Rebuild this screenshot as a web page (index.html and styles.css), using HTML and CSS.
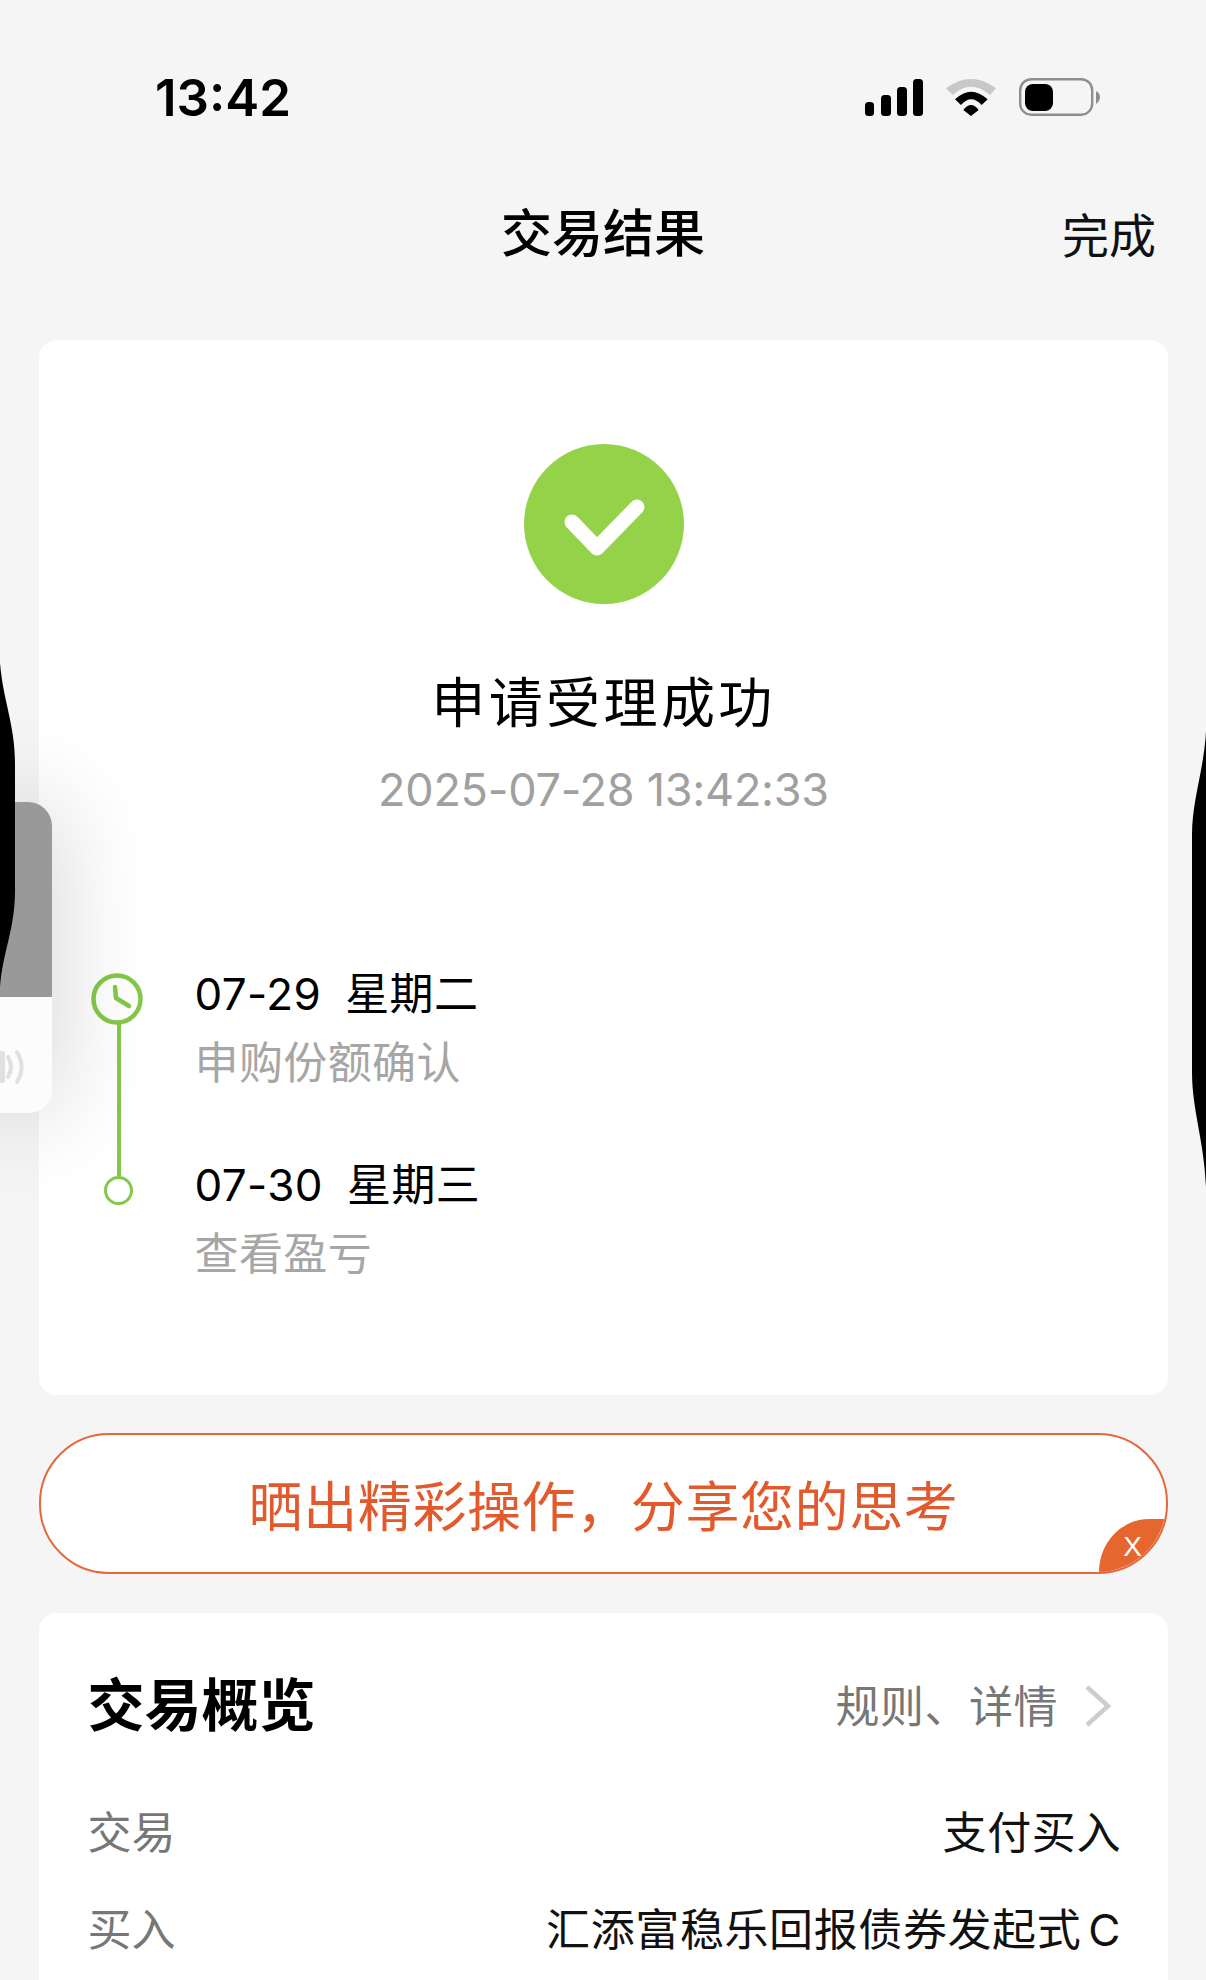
FILE: index.html
```html
<!DOCTYPE html>
<html lang="zh-CN">
<head>
    <meta charset="UTF-8">
    <meta name="viewport" content="width=device-width, initial-scale=1.0">
    <title>交易结果</title>
    <link rel="stylesheet" href="styles.css">
</head>
<body>
    <div class="page">
        <div class="status-bar">
            <span class="status-time">13:42</span>
            <div class="status-icons">
                <svg class="icon-signal" width="58" height="37" viewBox="0 0 58 37">
                    <rect x="0" y="23" width="9" height="14" rx="3.5"/>
                    <rect x="16" y="16" width="10" height="21" rx="3.5"/>
                    <rect x="32" y="8" width="10" height="29" rx="3.5"/>
                    <rect x="48" y="0" width="10" height="37" rx="3.5"/>
                </svg>
                <svg class="icon-wifi" width="50" height="37" viewBox="315 57 150 111">
                    <path fill="#c8c8c8" d="M315 85 Q390 29 465 85 L447 105 Q390 55 335 105 Z"/>
                    <path d="M342 118 Q390 72 440 118 L422 135 Q390 101 360 135 Z"/>
                    <path d="M367 150 Q390 120 413 150 L390 168 Z"/>
                </svg>
                <svg class="icon-battery" width="81" height="38" viewBox="0 0 81 38">
                    <rect x="1.2" y="1.2" width="72" height="35.5" rx="11" fill="none" stroke="#8e8e8e" stroke-width="2.4"/>
                    <rect x="6" y="6" width="28" height="27" rx="8"/>
                    <path fill="#8e8e8e" d="M77 13 Q81 15 81 19 Q81 23 77 26 Z"/>
                </svg>
            </div>
        </div>

        <div class="nav-bar">
            <span></span>
            <span class="nav-title">交易结果</span>
            <span class="nav-done">完成</span>
        </div>

        <div class="card result-card">
            <svg class="result-icon" width="160" height="160" viewBox="0 0 160 160">
                <circle cx="80" cy="80" r="80" fill="#94d24a"/>
                <path d="M48 78 L73 104 L113 63" fill="none" stroke="#fff" stroke-width="15" stroke-linecap="round" stroke-linejoin="round"/>
            </svg>
            <div class="result-title">申请受理成功</div>
            <div class="result-time">2025-07-28 13:42:33</div>

            <div class="timeline">
                <div class="track">
                    <svg width="52" height="52" viewBox="0 0 52 52">
                        <circle cx="26" cy="26" r="23.5" fill="#fff" stroke="#84c84a" stroke-width="4.5"/>
                        <path d="M24 14 L25 25 L38 33" fill="none" stroke="#84c84a" stroke-width="4.5" stroke-linecap="round" stroke-linejoin="round"/>
                    </svg>
                    <div class="track-line"></div>
                    <div class="track-dot"></div>
                </div>
                <div class="steps">
                    <div class="step">
                        <div class="step-date">07-29<span class="step-week">星期二</span></div>
                        <div class="step-text">申购份额确认</div>
                    </div>
                    <div class="step">
                        <div class="step-date">07-30<span class="step-week">星期三</span></div>
                        <div class="step-text">查看盈亏</div>
                    </div>
                </div>
            </div>
        </div>

        <div class="share-banner">
            <span>晒出精彩操作，分享您的思考</span>
            <div class="share-close">X</div>
        </div>

        <div class="card overview-card">
            <div class="overview-head">
                <span class="overview-title">交易概览</span>
                <span class="overview-link">
                    <span class="link-text">规则、详情</span>
                    <svg width="28" height="44" viewBox="0 0 28 44">
                        <path d="M3 3 L24 22 L3 41" fill="none" stroke="#cdcdcd" stroke-width="4.5"/>
                    </svg>
                </span>
            </div>
            <div class="overview-row">
                <span class="row-label">交易</span>
                <span class="row-value">支付买入</span>
            </div>
            <div class="overview-row">
                <span class="row-label">买入</span>
                <span class="row-value fund-name">汇添富稳乐回报债券发起式 C</span>
            </div>
        </div>

        <!-- floating voice tab + black edges, they sit over the page -->
        <div class="float-tab">
            <div class="float-top"></div>
            <div class="float-bottom">
                <svg width="32" height="36" viewBox="0 0 32 36">
                    <rect x="0" y="2" width="7" height="32" rx="2" fill="#e0e0e0"/>
                    <path d="M10 8 Q16 18 10 28" fill="none" stroke="#e0e0e0" stroke-width="4" stroke-linecap="round"/>
                    <path d="M19 3 Q28 18 19 33" fill="none" stroke="#e0e0e0" stroke-width="4" stroke-linecap="round"/>
                </svg>
            </div>
        </div>
        <svg class="edge edge-left" width="15" height="324" viewBox="0 0 15 324">
            <path d="M0 0 C3 37 15 62 15 100 L15 227 C15 267 3 287 0 324 Z"/>
        </svg>
        <svg class="edge edge-right" width="14" height="456" viewBox="0 0 14 456">
            <path d="M14 0 C12 39 0 69 0 104 L0 341 C0 379 12 409 14 456 Z"/>
        </svg>
    </div>
</body>
</html>
```

FILE: styles.css
```css
* {
    box-sizing: border-box;
}

body {
    margin: 0;
    font-family: Inter, "Noto Sans CJK SC", sans-serif;
    color: #111;
    background: #f5f5f5;
}

.page {
    position: relative;
    width: 1206px;
    height: 1980px;
    padding-top: 60px;
    overflow: hidden;
    background: #f5f5f5;
}

.status-bar {
    display: flex;
    justify-content: space-between;
    align-items: center;
    height: 76px;
    padding: 0 106px 0 155px;
}

.status-time {
    margin-bottom: 2px;
    font-size: 51px;
    font-weight: 600;
    color: #000;
}

.status-icons {
    display: flex;
    align-items: center;
    gap: 22px;
    margin-bottom: 2px;
}

.icon-signal {
    margin-right: 1.5px;
}

.icon-wifi {
    margin-right: 1px;
}

.nav-bar {
    display: grid;
    grid-template-columns: 1fr auto 1fr;
    align-items: center;
    height: 80px;
    margin-top: 54px;
    padding: 0 52px;
}

.nav-title {
    font-size: 51px;
    font-weight: 500;
    color: #000;
}

.nav-done {
    justify-self: end;
    margin-top: 4px;
    margin-right: -2px;
    font-size: 47px;
}

.card {
    margin: 0 38px 0 39px;
    background: #fff;
    border-radius: 18px;
}

.result-card {
    margin-top: 70px;
    padding: 104px 0 111px;
    display: flex;
    flex-direction: column;
}

.result-icon {
    align-self: center;
}

.result-title {
    margin-top: 65px;
    font-size: 54px;
    line-height: 70px;
    letter-spacing: 3.4px;
    text-align: center;
    color: #000;
}

.result-time {
    margin-top: 23px;
    font-size: 45px;
    line-height: 56px;
    letter-spacing: -0.25px;
    text-align: center;
    color: #a0a0a0;
}

.timeline {
    display: flex;
    margin-top: 146px;
    padding-left: 52px;
}

.track {
    display: flex;
    flex-direction: column;
    align-items: center;
    width: 52px;
    padding-top: 9px;
    margin-right: 51.5px;
}

.track svg {
    display: block;
}

.track-line {
    width: 4px;
    height: 152px;
    margin-top: -1px;
    margin-left: 3px;
    background: #84c84a;
}

.track-dot {
    width: 29px;
    height: 29px;
    margin-left: 2px;
    border: 3.5px solid #84c84a;
    border-radius: 50%;
    background: #fff;
}

.steps {
    display: flex;
    flex-direction: column;
    gap: 62px;
}

.step {
    display: flex;
    flex-direction: column;
    gap: 9px;
}

.step-date {
    font-size: 44px;
    line-height: 60px;
    letter-spacing: 0.4px;
    color: #000;
}

.step-week {
    margin-left: 24px;
}

.step-text {
    font-size: 44px;
    line-height: 60px;
    letter-spacing: 0.4px;
    color: #a6a6a6;
}

.share-banner {
    position: relative;
    display: flex;
    align-items: center;
    justify-content: center;
    height: 141px;
    margin: 38px 38px 0 39px;
    border: 2px solid #e4683a;
    border-radius: 70px;
    overflow: hidden;
    background: #fff;
    font-size: 54px;
    letter-spacing: 0.6px;
    color: #e2592c;
}

.share-close {
    position: absolute;
    right: 0;
    bottom: 0;
    width: 67px;
    height: 53px;
    padding: 8px 0 0 1px;
    border-top-left-radius: 50px 53px;
    background: #e5672f;
    font-family: "Liberation Sans", sans-serif;
    font-size: 28px;
    line-height: 40px;
    text-align: center;
    color: #fff;
}

.overview-card {
    margin-top: 39px;
    height: 400px;
    padding: 60px 47px 0 48.5px;
}

.overview-head {
    display: flex;
    justify-content: space-between;
    align-items: center;
    height: 66px;
}

.overview-title {
    margin-bottom: 10px;
    font-size: 57px;
    font-weight: 700;
    color: #000;
}

.overview-link {
    display: flex;
    align-items: center;
    gap: 26px;
    margin-right: 9px;
    font-size: 44px;
    letter-spacing: 0.5px;
    color: #777;
}

.link-text {
    margin-bottom: 4px;
}

.overview-row {
    display: flex;
    justify-content: space-between;
    font-size: 44px;
    line-height: 60px;
    margin-top: 37px;
}

.overview-head + .overview-row {
    margin-top: 64px;
}

.row-label {
    color: #777;
}

.row-value {
    letter-spacing: 0.6px;
}

.fund-name {
    word-spacing: -6px;
}

.float-tab {
    position: absolute;
    left: -20px;
    top: 802px;
    width: 72px;
    height: 311px;
    border-radius: 24px;
    box-shadow: 0 0 100px rgba(0, 0, 0, 0.2);
    overflow: hidden;
}

.float-top {
    height: 195px;
    background: #999;
}

.float-bottom {
    display: flex;
    justify-content: flex-end;
    align-items: center;
    height: 116px;
    padding: 24px 22px 0 0;
    background: #fcfcfc;
}

.edge {
    position: absolute;
    fill: #000;
}

.edge-left {
    left: 0;
    top: 663px;
}

.edge-right {
    right: 0;
    top: 731px;
}
```
